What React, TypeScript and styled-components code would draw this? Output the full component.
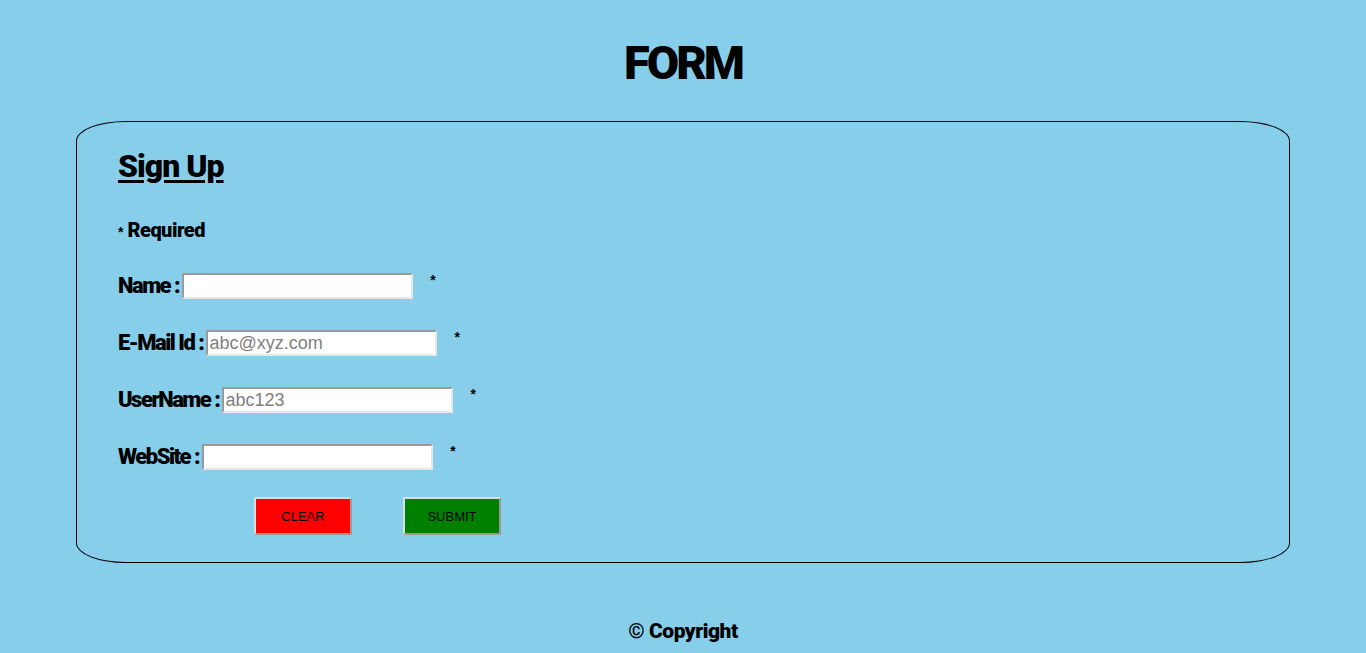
import React from 'react';
import styled, { createGlobalStyle } from 'styled-components';

const GlobalStyle = createGlobalStyle`
  html, body {
    margin: 0;
    padding: 0;
    background: #87ceeb;
  }
  body {
    font-family: Impact, "Roboto", "DejaVu Sans Condensed", sans-serif;
    color: #000;
  }
`;

const Page = styled.div`
  display: flex;
  flex-direction: column;
  align-items: center;
  min-height: 653px;
`;

const Title = styled.h1`
  margin: 0;
  padding-top: 39px;
  height: 121px;
  box-sizing: border-box;
  font-size: 47px;
  line-height: 1;
  font-weight: 900;
  letter-spacing: -3px;
`;

const Card = styled.form`
  width: 1214px;
  box-sizing: border-box;
  border: 1px solid #000;
  border-radius: 50px / 20px;
  padding: 24px 41px 27px;
  display: flex;
  flex-direction: column;
`;

const Heading = styled.h2`
  margin: 0;
  font-size: 32px;
  line-height: 40px;
  font-weight: 900;
  text-decoration: underline;
  text-decoration-thickness: 3px;
  text-underline-offset: 3px;
  letter-spacing: -1px;
`;

const Required = styled.p`
  margin: 32px 0 0;
  font-size: 20px;
  line-height: 24px;
  font-weight: 900;
  letter-spacing: -0.5px;
`;

const Star = styled.span<{ $gap?: number }>`
  font-family: "Liberation Sans", Arial, sans-serif;
  font-size: 14px;
  font-weight: bold;
  margin-left: ${({ $gap }) => $gap ?? 0}px;
  align-self: flex-start;
  line-height: 14px;
`;

const Row = styled.div`
  display: flex;
  align-items: center;
  margin-top: 31px;
  height: 26px;
`;

const Label = styled.label`
  font-size: 22px;
  font-weight: 900;
  line-height: 26px;
  letter-spacing: -1.5px;
  margin-right: 3px;
`;

const Field = styled.input`
  width: 231px;
  height: 26px;
  box-sizing: border-box;
  border-style: solid;
  border-width: 2px;
  border-color: #9a9a9a #e6e6e6 #e6e6e6 #9a9a9a;
  background: #fff;
  padding: 0 1px;
  font-family: "Liberation Sans", Arial, sans-serif;
  font-size: 18px;
  outline: none;
  &::placeholder {
    color: #808080;
  }
`;

const Actions = styled.div`
  display: flex;
  gap: 51px;
  margin-top: 27px;
  padding-left: 136px;
`;

const Button = styled.button<{ $tone: string }>`
  width: 98px;
  height: 38px;
  box-sizing: border-box;
  border-style: solid;
  border-width: 2px;
  border-color: #dcdcdc #9a9a9a #9a9a9a #dcdcdc;
  background: ${({ $tone }) => $tone};
  color: #000;
  font-family: "Liberation Sans", Arial, sans-serif;
  font-size: 13px;
  padding: 0;
  cursor: pointer;
`;

const Footer = styled.footer`
  margin-top: 56px;
  font-size: 21px;
  font-weight: 900;
  line-height: 24px;
  letter-spacing: -0.5px;
`;

const fields = [
  { label: 'Name', placeholder: '' },
  { label: 'E-Mail Id', placeholder: 'abc@xyz.com' },
  { label: 'UserName', placeholder: 'abc123' },
  { label: 'WebSite', placeholder: '' },
];

export default function App() {
  return (
    <Page>
      <GlobalStyle />
      <Title>FORM</Title>
      <Card onSubmit={(e) => e.preventDefault()}>
        <Heading>Sign Up</Heading>
        <Required>
          <Star>*</Star> Required
        </Required>
        {fields.map((f) => (
          <Row key={f.label}>
            <Label>{f.label} :</Label>
            <Field type="text" placeholder={f.placeholder} />
            <Star $gap={17}>*</Star>
          </Row>
        ))}
        <Actions>
          <Button type="reset" $tone="#ff0000">CLEAR</Button>
          <Button type="submit" $tone="#008000">SUBMIT</Button>
        </Actions>
      </Card>
      <Footer>© Copyright</Footer>
    </Page>
  );
}
